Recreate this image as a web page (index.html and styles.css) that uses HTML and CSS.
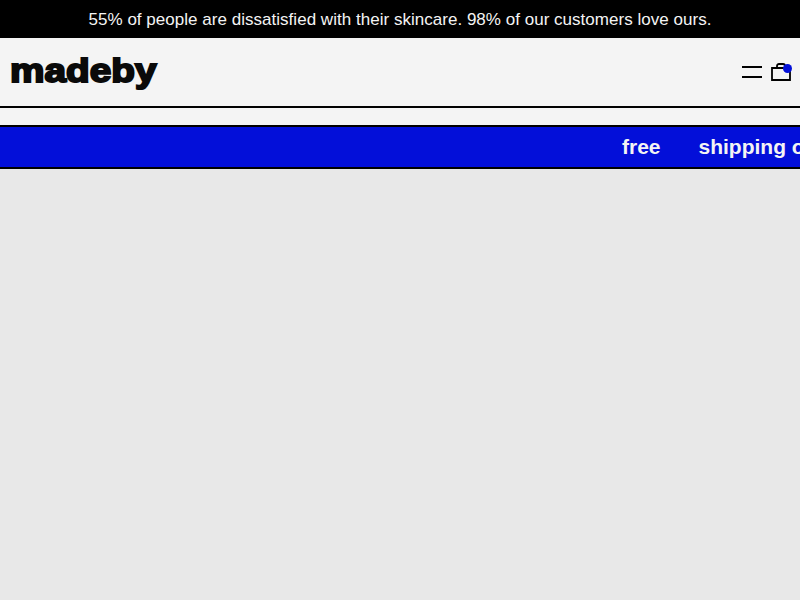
FILE: index.html
```html
<!DOCTYPE html>
<html lang="en">
<head>
    <meta charset="UTF-8">
    <meta name="viewport" content="width=device-width, initial-scale=1.0">
    <title>madeby</title>
    <link rel="stylesheet" href="styles.css">
</head>
<body>

    <!-- Announcement -->
    <div class="announcement">55% of people are dissatisfied with their skincare. 98% of our customers love ours.</div>

    <!-- Header -->
    <header class="header">
        <a class="logo" href="#">madeby</a>
        <div class="header-icons">
            <svg class="menu-icon" width="20" height="12" viewBox="0 0 20 12" aria-label="Menu">
                <path d="M0 1H20M0 11H20" stroke="#000" stroke-width="2" fill="none"/>
            </svg>
            <span class="cart">
                <svg width="20" height="18" viewBox="0 0 20 18" aria-label="Cart">
                    <path d="M1 5H19V17H1Z M6 5V3C6 1.500 7 1 8 1H12C13 1 14 1.500 14 3V5" stroke="#000" stroke-width="1.800" fill="none"/>
                </svg>
                <span class="cart-dot"></span>
            </span>
        </div>
    </header>

    <div class="header-gap"></div>

    <!-- Ticker -->
    <div class="ticker">
        <div class="ticker-track">
            <span>free</span>
            <span>shipping on all orders</span>
        </div>
    </div>

    <main class="content"></main>

</body>
</html>
```

FILE: styles.css
```css
* {
    margin: 0;
    padding: 0;
    box-sizing: border-box;
}
html, body {
    height: 100%;
}
body {
    display: flex;
    flex-direction: column;
    font-family: "Liberation Sans", Arial, sans-serif;
    background-color: #e8e8e8;
    overflow: hidden;
}
.announcement {
    height: 38px;
    display: flex;
    align-items: center;
    justify-content: center;
    padding-top: 2px;
    background: #000;
    color: #f4f4f4;
    font-size: 17px;
    letter-spacing: 0.025px;
}
.header {
    height: 70px;
    display: flex;
    justify-content: space-between;
    align-items: center;
    padding: 0 9px 0 10px;
    background: #f4f4f4;
    border-bottom: 2px solid #000;
}
.logo {
    margin-bottom: 4px;
    font-size: 34px;
    font-weight: bold;
    color: #0a0a0a;
    text-decoration: none;
    -webkit-text-stroke: 2px #0a0a0a;
    transform: scaleX(1.14);
    transform-origin: left center;
}
.header-icons {
    display: flex;
    align-items: center;
    gap: 9px;
}
.menu-icon {
    display: block;
}
.cart {
    position: relative;
    display: block;
    height: 18px;
}
.cart svg {
    display: block;
}
.cart-dot {
    position: absolute;
    top: 1px;
    right: -1px;
    width: 9px;
    height: 9px;
    border-radius: 50%;
    background: #0310d8;
}
.header-gap {
    height: 17px;
    background: #f4f4f4;
}
.ticker {
    height: 44px;
    background: #030fd9;
    border-top: 2px solid #000;
    border-bottom: 2px solid #000;
    overflow: hidden;
}
.ticker-track {
    height: 100%;
    display: flex;
    align-items: center;
    gap: 38px;
    padding-left: 622px;
    color: #f4f4f4;
    font-size: 21px;
    font-weight: bold;
    white-space: nowrap;
}
.content {
    flex: 1;
    background: #e8e8e8;
}
```
